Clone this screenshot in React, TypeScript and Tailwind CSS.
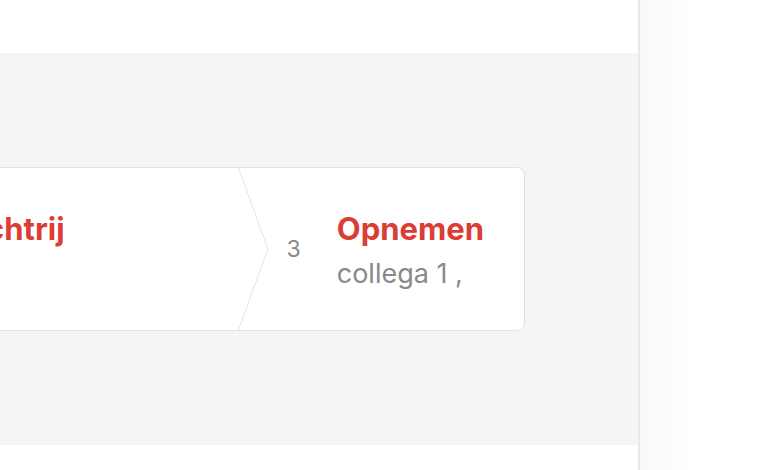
import React from 'react';

type Step = {
  nr: number;
  title: string;
  sub: string;
};

const steps: Step[] = [
  { nr: 2, title: 'Wachtrij', sub: '' },
  { nr: 3, title: 'Opnemen', sub: 'collega 1 ,' },
];

const Chevron = () => (
  <svg
    className="absolute top-0 right-[-31px] h-full w-[31px]"
    viewBox="0 0 31 162"
    preserveAspectRatio="none"
  >
    <polyline points="0.5,0 30,81 0.5,162" fill="none" stroke="#e4e4e4" strokeWidth="1" />
  </svg>
);

export default function App() {
  return (
    <div className="flex h-[470px] w-[774px] overflow-hidden bg-white font-['Inter',sans-serif]">
      {/* Main */}
      <div className="flex w-[638px] shrink-0 flex-col overflow-hidden">
        <div className="h-[53px] shrink-0 bg-white" />
        <div className="flex flex-1 items-center justify-end bg-[#f5f5f5] pr-[113px]">
          {/* Stepper card */}
          <div className="flex h-[164px] shrink-0 rounded-lg border border-[#e2e2e2] bg-white">
            {steps.map((s, i) => (
              <div
                key={s.nr}
                className={
                  i === 0
                    ? 'relative flex items-center gap-[36px] pr-[173px] pl-[20px]'
                    : 'relative flex items-center gap-[36px] pr-[40px] pl-[49px]'
                }
              >
                <span className="text-[23px] leading-none text-[#8a8a8a]">{s.nr}</span>
                <div className="flex flex-col pt-[3px]">
                  <span className="text-[31px] leading-[40px] font-bold text-[#db3d34]">
                    {s.title}
                  </span>
                  <span className="mt-[6px] min-h-[38px] text-[27px] leading-[38px] text-[#8a8a8a]">
                    {s.sub}
                  </span>
                </div>
                {i === 0 && <Chevron />}
              </div>
            ))}
          </div>
        </div>
        <div className="h-[25px] shrink-0 bg-white" />
      </div>
      {/* Side panel */}
      <div className="flex-1 border-l-2 border-[#e9e9e9] bg-[linear-gradient(to_right,#f9f9f9,#ffffff_55px)]" />
    </div>
  );
}
